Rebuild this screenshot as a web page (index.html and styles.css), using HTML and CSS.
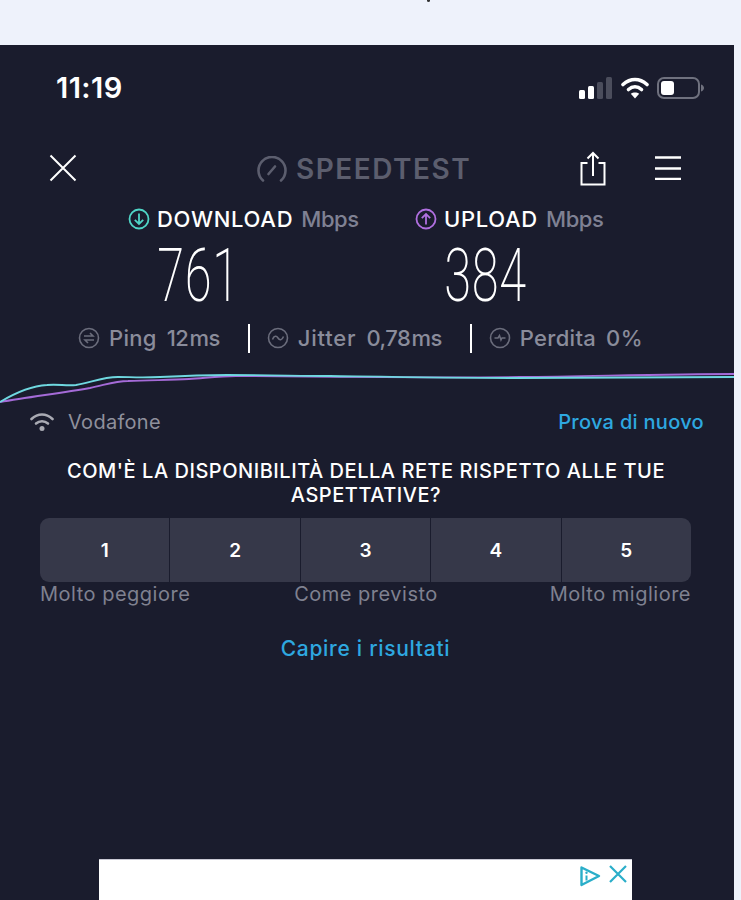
FILE: index.html
```html
<!DOCTYPE html>
<html lang="it">
<head>
<meta charset="utf-8">
<title>Speedtest</title>
<link rel="stylesheet" href="styles.css">
</head>
<body>
<div class="page">
  <div class="topband"><span class="speck"></span></div>
  <main class="app">
    <header class="status">
      <span class="clock">11:19</span>
      <div class="status-icons">
        <svg class="signal" width="34" height="22" viewBox="0 0 34 22"><rect x="0" y="13" width="6" height="9" rx="1.5" fill="#fff"/><rect x="9" y="9" width="6" height="13" rx="1.5" fill="#fff"/><rect x="18" y="5" width="6" height="17" rx="1.5" fill="#4b4d5c"/><rect x="27" y="0" width="6" height="22" rx="1.5" fill="#4b4d5c"/></svg>
        <svg class="wifi" width="28" height="22" viewBox="0 0 28 22"><path d="M2 7.500C9.500 .8 18.500 .8 26 7.500" fill="none" stroke="#fff" stroke-width="3.600" stroke-linecap="round"/><path d="M7.500 12.500C11.500 9 16.500 9 20.500 12.500" fill="none" stroke="#fff" stroke-width="3.600" stroke-linecap="round"/><path d="M14 21.500L9.800 16.800C12 15 16 15 18.200 16.800Z" fill="#fff"/></svg>
        <svg class="battery" width="47" height="22" viewBox="0 0 47 22"><rect x="1" y="1" width="41" height="20" rx="6" fill="none" stroke="#6f717e" stroke-width="2"/><rect x="4" y="4" width="13" height="14" rx="3" fill="#fff"/><path d="M44 7.500c2 .6 3 2 3 3.500s-1 2.900-3 3.500z" fill="#6f717e"/></svg>
      </div>
    </header>

    <nav class="toolbar">
      <svg class="close" width="28" height="28" viewBox="0 0 28 28"><path d="M1.500 1.500L26.500 26.500M26.500 1.500L1.500 26.500" stroke="#fff" stroke-width="2" fill="none"/></svg>
      <div class="logo">
        <svg width="30" height="26" viewBox="0 0 30 26"><path d="M6 24.500A13.500 13.500 0 1 1 24 24.500" fill="none" stroke="#5c5e6e" stroke-width="2.600" stroke-linecap="round"/><path d="M11.500 18L18 10.500" stroke="#5c5e6e" stroke-width="2.600" stroke-linecap="round"/></svg>
        <span class="logo-word">SPEEDTEST</span>
      </div>
      <div class="tools">
        <svg width="26" height="35" viewBox="0 0 26 35"><path d="M7.500 12H1.500V33.500H24.500V12H18.500M13 25V2M7.500 7.500L13 2L18.500 7.500" stroke="#fff" stroke-width="2" fill="none"/></svg>
        <svg width="26" height="24" viewBox="0 0 26 24"><path d="M0 1.500H26M0 12.500H26M0 23H26" stroke="#fff" stroke-width="2.400" fill="none"/></svg>
      </div>
    </nav>

    <section class="results">
      <div class="result">
        <div class="result-head">
          <svg width="22" height="22" viewBox="0 0 22 22"><circle cx="11" cy="11" r="9.500" fill="none" stroke="#4fd5c6" stroke-width="1.800"/><path d="M11 5.500V16M6.800 11.800L11 16L15.200 11.800" fill="none" stroke="#4fd5c6" stroke-width="1.800"/></svg>
          <span class="dir">DOWNLOAD</span><span class="unit">Mbps</span>
        </div>
        <div class="value"><span>761</span></div>
      </div>
      <div class="result result-up">
        <div class="result-head">
          <svg width="22" height="22" viewBox="0 0 22 22"><circle cx="11" cy="11" r="9.500" fill="none" stroke="#b06fe0" stroke-width="1.800"/><path d="M11 16.500V6M6.800 10.200L11 6L15.200 10.200" fill="none" stroke="#b06fe0" stroke-width="1.800"/></svg>
          <span class="dir">UPLOAD</span><span class="unit">Mbps</span>
        </div>
        <div class="value"><span>384</span></div>
      </div>
    </section>

    <section class="metrics">
      <div class="metric">
        <svg width="22" height="22" viewBox="0 0 22 22"><circle cx="11" cy="11" r="9.500" fill="none" stroke="#6b6d7c" stroke-width="1.600"/><path d="M6 9H15L12 6M16 13H7L10 16" fill="none" stroke="#6b6d7c" stroke-width="1.600"/></svg>
        <span class="metric-name">Ping</span><span class="metric-val">12<i>ms</i></span>
      </div>
      <span class="sep"></span>
      <div class="metric">
        <svg width="22" height="22" viewBox="0 0 22 22"><circle cx="11" cy="11" r="9.500" fill="none" stroke="#6b6d7c" stroke-width="1.600"/><path d="M5.500 12.500C7 8.500 9.500 8.500 11 11S15 13.500 16.500 9.500" fill="none" stroke="#6b6d7c" stroke-width="1.600"/></svg>
        <span class="metric-name metric-name-wide">Jitter</span><span class="metric-val">0,78<i>ms</i></span>
      </div>
      <span class="sep"></span>
      <div class="metric">
        <svg width="22" height="22" viewBox="0 0 22 22"><circle cx="11" cy="11" r="9.500" fill="none" stroke="#6b6d7c" stroke-width="1.600"/><path d="M5.500 11H9L10.500 8.500L12 13L13 11H16.500" fill="none" stroke="#6b6d7c" stroke-width="1.500"/></svg>
        <span class="metric-name">Perdita</span><span class="metric-val">0<i>%</i></span>
      </div>
    </section>

    <svg class="graph" width="734" height="46" viewBox="0 0 734 46">
      <path d="M0 42C30 37 60 33 90 28C105 25 115 21 128 21C150 20 170 20 189 19C205 18 220 16 236 16C330 17 430 18 520 17C600 16 670 14 734 14" fill="none" stroke="#a56bd8" stroke-width="1.800"/>
      <path d="M0 42C15 33 30 26 47 25C58 24 66 26 76 25C90 23 102 17 118 17C130 17 140 18 160 17C180 16 205 15 227 15C270 15 300 16 330 16C400 17 460 18 520 18C600 18 670 17 734 17" fill="none" stroke="#6fd8e0" stroke-width="1.800"/>
    </svg>

    <div class="network">
      <div class="carrier">
        <svg width="24" height="20" viewBox="0 0 24 20"><path d="M1.500 7C8 1 16 1 22.500 7" fill="none" stroke="#a9aab3" stroke-width="2.600" stroke-linecap="round"/><path d="M6 11.500C9.500 8.500 14.500 8.500 18 11.500" fill="none" stroke="#a9aab3" stroke-width="2.600" stroke-linecap="round"/><circle cx="12" cy="16.500" r="2.500" fill="#a9aab3"/></svg>
        <span>Vodafone</span>
      </div>
      <a class="link">Prova di nuovo</a>
    </div>

    <h2 class="question">COM'È LA DISPONIBILITÀ DELLA RETE RISPETTO ALLE TUE ASPETTATIVE?</h2>

    <div class="rating">
      <button>1</button><button>2</button><button>3</button><button>4</button><button>5</button>
    </div>
    <div class="scale">
      <span>Molto peggiore</span><span class="scale-mid">Come previsto</span><span>Molto migliore</span>
    </div>

    <a class="link understand">Capire i risultati</a>

    <aside class="ad">
      <svg width="22" height="22" viewBox="0 0 22 22"><path d="M2.500 2.500L20 11L2.500 20Z" fill="none" stroke="#2aaec9" stroke-width="2.400" stroke-linejoin="round"/><path d="M7.500 10.500V15.500" stroke="#2aaec9" stroke-width="2"/><circle cx="7.500" cy="7.800" r="1.200" fill="#2aaec9"/></svg>
      <svg width="18" height="18" viewBox="0 0 18 18"><path d="M1 1L17 17M17 1L1 17" stroke="#2aaec9" stroke-width="2.200"/></svg>
    </aside>
  </main>
</div>
</body>
</html>
```
FILE: styles.css
```css
* { box-sizing: border-box; }

html, body {
  margin: 0;
  height: 900px;
  overflow: hidden;
  background: #eef2fb;
}

body {
  font-family: Inter, "Liberation Sans", sans-serif;
  color: #fff;
}

.page {
  width: 741px;
  height: 900px;
}

.topband {
  height: 45px;
  display: flex;
  justify-content: center;
  padding-left: 115px;
}

.speck {
  width: 3px;
  height: 2px;
  border-radius: 0 0 2px 2px;
  background: #333;
}

.app {
  width: 734px;
  height: 855px;
  background: #1a1c2d;
  display: flex;
  flex-direction: column;
  overflow: hidden;
}

/* Phone status bar */
.status {
  height: 62px;
  margin-bottom: 45px;
  padding: 32px 30px 0 56px;
  display: flex;
  justify-content: space-between;
  align-items: flex-start;
  flex: none;
}

.clock {
  font-size: 29px;
  line-height: 22px;
  font-weight: 600;
  letter-spacing: .4px;
}

.status-icons {
  display: flex;
  gap: 8px;
}

/* App toolbar */
.toolbar {
  height: 44px;
  padding: 2px 53px 0 49px;
  display: flex;
  align-items: flex-start;
  flex: none;
}

.logo {
  display: flex;
  align-items: center;
  gap: 9px;
  margin-left: 180px;
  height: 30px;
}

.logo-word {
  font-size: 28px;
  font-weight: 600;
  line-height: 28px;
  color: #5c5e6e;
  letter-spacing: 1.500px;
}

.tools {
  margin-left: auto;
  display: flex;
  gap: 49px;
  align-items: flex-start;
  margin-top: -3px;
}

.tools svg:last-child { margin-top: 5px; }

/* Download and upload results */
.results {
  display: flex;
  margin-top: 13px;
  padding-left: 128px;
  height: 114px;
  flex: none;
}

.result { width: 287px; }

.result-head {
  display: flex;
  align-items: center;
  height: 20px;
  font-size: 22px;
}

.dir {
  margin-left: 7px;
  font-weight: 500;
  letter-spacing: .7px;
  line-height: 20px;
}

.unit {
  margin-left: 8px;
  font-weight: 500;
  letter-spacing: -.4px;
  color: #7f8193;
  line-height: 20px;
}

.value {
  width: 79px;
  margin: 18px 0 0 31px;
  height: 56px;
  display: flex;
  justify-content: center;
}

.value span {
  font-family: Roboto, sans-serif;
  font-weight: 200;
  font-size: 75px;
  line-height: 56px;
  letter-spacing: 1px;
  transform: scaleX(.65);
}

/* Ping, jitter and packet loss */
.metrics {
  display: flex;
  align-items: center;
  height: 30px;
  padding-left: 78px;
  font-size: 22px;
  font-weight: 500;
  letter-spacing: .3px;
  color: #8a8c9b;
  flex: none;
}

.metric {
  display: flex;
  align-items: center;
}

.metric-name { margin-left: 9px; }
.metric-name-wide { letter-spacing: .8px; }
.metric-val { margin-left: 10px; letter-spacing: -.5px; }
.metric-val i { font-style: normal; margin-left: 1px; }

.sep {
  width: 2px;
  height: 29px;
  background: #fff;
  margin: 0 17px 0 28px;
}

.graph {
  display: block;
  margin-top: 7px;
  flex: none;
}

/* Network row */
.network {
  display: flex;
  justify-content: space-between;
  align-items: center;
  padding: 0 30px;
  margin-top: 4px;
  height: 24px;
  font-size: 20px;
  letter-spacing: .3px;
  flex: none;
}

.carrier {
  display: flex;
  align-items: center;
  gap: 14px;
  color: #8f909c;
}

.link {
  color: #2ea8e0;
  font-weight: 500;
}

.question {
  margin: 25px 0 0;
  padding: 0 62px 0 60px;
  font-size: 20px;
  font-weight: 500;
  letter-spacing: .53px;
  line-height: 24px;
  text-align: center;
  flex: none;
}

/* Rating control */
.rating {
  margin: 11px 43px 0 40px;
  height: 64px;
  display: flex;
  border-radius: 9px;
  overflow: hidden;
  gap: 1px;
  flex: none;
}

.rating button {
  flex: 1;
  border: 0;
  padding: 0;
  background: #363849;
  color: #fff;
  font: 600 19px Inter, sans-serif;
}

.scale {
  margin: 0 43px 0 40px;
  display: flex;
  justify-content: space-between;
  height: 24px;
  font-size: 20px;
  letter-spacing: .5px;
  line-height: 24px;
  color: #7f8190;
  flex: none;
}

.scale-mid { margin-right: 8px; }

.understand {
  margin: 31px 3px 0 0;
  align-self: center;
  font-size: 21px;
  letter-spacing: .7px;
  line-height: 24px;
}

/* Ad banner, cut by the bottom of the window */
.ad {
  margin: auto 102px 0 99px;
  height: 41px;
  flex: none;
  background: #fff;
  border-top: 1px solid #c9c9d4;
  padding: 5px 5px 0 0;
  display: flex;
  justify-content: flex-end;
  gap: 8px;
}
```
